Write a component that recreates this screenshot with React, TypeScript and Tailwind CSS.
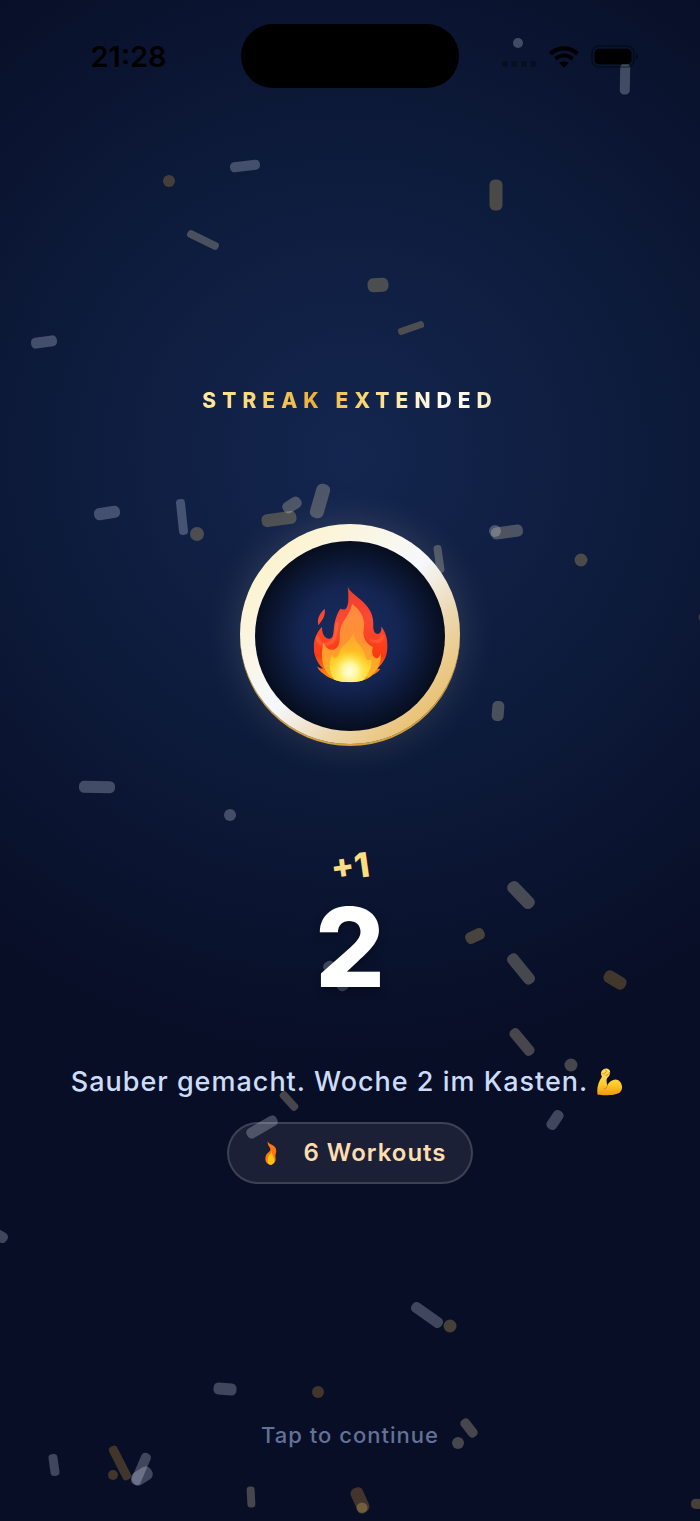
// Full-screen celebration shown after a workout week is completed: confetti,
// the flame medal, the new streak count and a chip with the workout total.

type Tone = 'silver' | 'cream' | 'gold' | 'amber'

type Piece = {
  x: number
  y: number
  w: number
  h: number
  rotate?: number
  tone: Tone
}

const TONES: Record<Tone, string> = {
  silver: '#e8eeff',
  cream: '#fff0c0',
  gold: '#ffd670',
  amber: '#f0b040',
}

// x / y are the centre of each piece.
const CONFETTI: Piece[] = [
  { x: 518, y: 43, w: 10, h: 10, tone: 'silver' },
  { x: 625, y: 79, w: 10, h: 31, rotate: 1, tone: 'silver' },
  { x: 245, y: 166, w: 30, h: 10, rotate: -7, tone: 'silver' },
  { x: 169, y: 181, w: 12, h: 12, tone: 'amber' },
  { x: 496, y: 195, w: 13, h: 31, tone: 'gold' },
  { x: 203, y: 240, w: 34, h: 8, rotate: 26, tone: 'cream' },
  { x: 378, y: 285, w: 21, h: 14, rotate: -4, tone: 'gold' },
  { x: 411, y: 328, w: 27, h: 7, rotate: -19, tone: 'gold' },
  { x: 44, y: 342, w: 26, h: 11, rotate: -8, tone: 'silver' },
  { x: 107, y: 513, w: 26, h: 12, rotate: -9, tone: 'silver' },
  { x: 182, y: 517, w: 9, h: 36, rotate: -6, tone: 'silver' },
  { x: 197, y: 534, w: 14, h: 14, tone: 'gold' },
  { x: 279, y: 519, w: 35, h: 13, rotate: -8, tone: 'gold' },
  { x: 292, y: 505, w: 20, h: 12, rotate: -32, tone: 'cream' },
  { x: 320, y: 501, w: 14, h: 35, rotate: 16, tone: 'cream' },
  { x: 439, y: 559, w: 8, h: 28, rotate: -8, tone: 'cream' },
  { x: 495, y: 531, w: 12, h: 12, tone: 'silver' },
  { x: 507, y: 532, w: 32, h: 12, rotate: -8, tone: 'cream' },
  { x: 581, y: 560, w: 13, h: 13, tone: 'gold' },
  { x: 703, y: 617, w: 9, h: 9, tone: 'amber' },
  { x: 498, y: 711, w: 12, h: 20, rotate: 4, tone: 'cream' },
  { x: 97, y: 787, w: 36, h: 12, rotate: 1, tone: 'silver' },
  { x: 230, y: 815, w: 12, h: 12, tone: 'silver' },
  { x: 521, y: 895, w: 33, h: 13, rotate: 46, tone: 'cream' },
  { x: 475, y: 936, w: 20, h: 12, rotate: -25, tone: 'gold' },
  { x: 521, y: 969, w: 36, h: 12, rotate: 51, tone: 'cream' },
  { x: 336, y: 976, w: 34, h: 12, rotate: 54, tone: 'silver' },
  { x: 615, y: 980, w: 24, h: 13, rotate: 30, tone: 'amber' },
  { x: 522, y: 1042, w: 32, h: 11, rotate: 50, tone: 'cream' },
  { x: 571, y: 1065, w: 13, h: 13, tone: 'cream' },
  { x: 289, y: 1101, w: 23, h: 8, rotate: 48, tone: 'cream' },
  { x: 262, y: 1127, w: 34, h: 11, rotate: -30, tone: 'silver' },
  { x: 555, y: 1120, w: 21, h: 11, rotate: -56, tone: 'silver' },
  { x: 0, y: 1236, w: 16, h: 11, rotate: 30, tone: 'silver' },
  { x: 427, y: 1315, w: 36, h: 11, rotate: 35, tone: 'silver' },
  { x: 450, y: 1326, w: 13, h: 13, tone: 'gold' },
  { x: 225, y: 1389, w: 23, h: 12, rotate: 5, tone: 'silver' },
  { x: 318, y: 1392, w: 12, h: 12, tone: 'amber' },
  { x: 469, y: 1428, w: 21, h: 10, rotate: 52, tone: 'cream' },
  { x: 458, y: 1443, w: 12, h: 12, tone: 'cream' },
  { x: 54, y: 1465, w: 9, h: 22, rotate: -8, tone: 'silver' },
  { x: 120, y: 1463, w: 9, h: 37, rotate: -27, tone: 'amber' },
  { x: 113, y: 1475, w: 10, h: 10, tone: 'amber' },
  { x: 141, y: 1469, w: 10, h: 34, rotate: 23, tone: 'silver' },
  { x: 142, y: 1476, w: 22, h: 14, rotate: -32, tone: 'silver' },
  { x: 251, y: 1497, w: 8, h: 21, rotate: -3, tone: 'cream' },
  { x: 360, y: 1500, w: 13, h: 26, rotate: -24, tone: 'amber' },
  { x: 362, y: 1508, w: 11, h: 11, tone: 'gold' },
  { x: 699, y: 1504, w: 16, h: 10, rotate: 5, tone: 'gold' },
]

function Confetti() {
  return (
    <svg
      className="pointer-events-none absolute inset-0 h-full w-full"
      viewBox="0 0 700 1521"
      preserveAspectRatio="xMidYMid slice"
      aria-hidden="true"
    >
      {CONFETTI.map((p, i) => (
        <rect
          key={i}
          x={p.x - p.w / 2}
          y={p.y - p.h / 2}
          width={p.w}
          height={p.h}
          rx={p.w === p.h ? p.w / 2 : Math.min(p.w, p.h) * 0.42}
          fill={TONES[p.tone]}
          fillOpacity={0.25}
          transform={`rotate(${p.rotate ?? 0} ${p.x} ${p.y})`}
        />
      ))}
    </svg>
  )
}

function StatusBar() {
  return (
    <header className="relative grid grid-cols-[1fr_218px_1fr] items-center pt-6 text-black">
      <time className="pt-0.5 pl-4 text-center text-[29px] leading-8 font-semibold">21:28</time>
      <div className="h-16 rounded-full bg-black" />
      <div className="flex items-center justify-center gap-3 pr-5">
        <svg width="36" height="22" viewBox="0 0 36 22" opacity="0.3">
          <rect x="1" y="16" width="6" height="6" rx="2" />
          <rect x="10" y="16" width="6" height="6" rx="2" />
          <rect x="20" y="16" width="6" height="6" rx="2" />
          <rect x="29" y="16" width="6" height="6" rx="2" />
        </svg>
        <svg width="30" height="23" viewBox="0 0 30 23">
          <path d="M1.6 8.7A19.6 19.6 0 0 1 28.4 8.7" fill="none" stroke="black" strokeWidth="4.2" />
          <path d="M6.4 13.8A12.6 12.6 0 0 1 23.6 13.8" fill="none" stroke="black" strokeWidth="3.9" />
          <path d="M15 22.8L10.4 18A6.8 6.8 0 0 1 19.6 18Z" />
        </svg>
        <svg width="48" height="23" viewBox="0 0 48 23">
          <rect x="1" y="1" width="42" height="21" rx="7" fill="none" stroke="black" strokeOpacity="0.4" strokeWidth="1.6" />
          <rect x="3.5" y="3.8" width="37" height="15.4" rx="4.5" />
          <path d="M45 8.5c2.6.6 2.6 5.4 0 6z" opacity="0.5" />
        </svg>
      </div>
    </header>
  )
}

function FlameIcon() {
  return (
    <svg width="75" height="97" viewBox="72 50 224 290" aria-hidden="true">
      <defs>
        <linearGradient id="flame-body" x1="0" y1="0" x2="0" y2="1">
          <stop offset="0" stopColor="#f03a2c" />
          <stop offset="0.35" stopColor="#fb4a33" />
          <stop offset="0.72" stopColor="#fb3a12" />
          <stop offset="1" stopColor="#ff9d1c" />
        </linearGradient>
        <linearGradient id="flame-mid" x1="0" y1="0" x2="0" y2="1">
          <stop offset="0" stopColor="#ff8a42" />
          <stop offset="0.5" stopColor="#ff9133" />
          <stop offset="1" stopColor="#ffb41f" />
        </linearGradient>
        <linearGradient id="flame-inner" x1="0" y1="0" x2="0" y2="1">
          <stop offset="0" stopColor="#ffa02e" />
          <stop offset="0.5" stopColor="#ffc524" />
          <stop offset="1" stopColor="#ffe95a" />
        </linearGradient>
        <radialGradient id="flame-glow">
          <stop offset="0" stopColor="#fffde4" />
          <stop offset="0.4" stopColor="#fff79a" stopOpacity="0.95" />
          <stop offset="1" stopColor="#ffe21c" stopOpacity="0" />
        </radialGradient>
        <clipPath id="flame-clip">
          <path d="M176 53C185 75 225 90 243 125C258 155 248 172 255 187C263 199 279 194 276 171C286 182 298 210 294 240C292 265 280 282 264 297L273 298C268 306 258 312 250 316C235 330 207 338 182 338C150 338 122 328 105 314C95 308 88 300 84 291C91 296 97 297 102 297C85 280 74 260 74 230C74 208 86 185 99 172C98 195 108 209 122 208C137 205 131 180 138 155C142 138 147 128 154 118C160 121 166 121 170 118C180 108 178 80 176 53Z" />
        </clipPath>
        <filter id="flame-soft" x="-20%" y="-20%" width="140%" height="140%">
          <feGaussianBlur stdDeviation="3" />
        </filter>
      </defs>
      <path d="M107 118C109 137 104 148 88 167C83 150 90 133 107 118Z" fill="#f8492f" />
      <g clipPath="url(#flame-clip)">
        <rect x="72" y="50" width="224" height="290" fill="url(#flame-body)" />
        <path
          d="M84 200C88 228 105 232 130 216C141 208 139 185 145 160"
          fill="none"
          stroke="#ff8655"
          strokeWidth="7"
          opacity="0.6"
          filter="url(#flame-soft)"
        />
        <path
          d="M280 196C279 216 262 222 244 210"
          fill="none"
          stroke="#ff7a50"
          strokeWidth="7"
          opacity="0.6"
          filter="url(#flame-soft)"
        />
        <path
          d="M189 103C218 126 229 150 223 182C219 207 236 226 251 232C246 248 250 264 262 266C268 266 272 258 274 250C278 284 262 305 240 322L125 322C102 300 92 268 103 219C110 240 130 248 145 232C158 216 146 190 158 165C168 145 184 130 189 103Z"
          fill="url(#flame-mid)"
        />
        <path
          d="M193 192C196 220 224 230 228 260C232 275 242 272 246 268C250 294 234 318 216 338L142 338C122 312 116 286 128 256C134 268 144 268 150 252C156 228 180 218 193 192Z"
          fill="url(#flame-inner)"
        />
        <ellipse cx="182" cy="305" rx="60" ry="66" fill="url(#flame-glow)" />
      </g>
    </svg>
  )
}

function Medal() {
  return (
    <div className="flex size-[220px] items-center justify-center rounded-full bg-[linear-gradient(135deg,#fff0bd_0%,#fcf4d6_20%,#f6f8fe_50%,#ecd8b0_68%,#e9c172_86%,#e3b04a_100%)] pt-1 shadow-[0_2px_0_#d3a03a,0_0_40px_rgba(255,244,220,0.15)]">
      <div className="flex size-[190px] items-center justify-center rounded-full bg-[radial-gradient(circle_closest-side,#182d60_0%,#142552_52%,#0c1837_78%,#060d1d_100%)] pb-0.5">
        <FlameIcon />
      </div>
    </div>
  )
}

function BicepsIcon() {
  return (
    <svg width="27" height="28" viewBox="740 50 82 84" role="img" aria-label="Stark">
      <defs>
        <linearGradient id="arm" x1="0" y1="0" x2="0" y2="1">
          <stop offset="0" stopColor="#ffe06a" />
          <stop offset="0.6" stopColor="#ffca2c" />
          <stop offset="1" stopColor="#f0970d" />
        </linearGradient>
      </defs>
      <path
        d="M762 54C770 48 784 51 783 63C782 72 778 76 774 80C770 87 773 96 774 102C784 84 803 79 813 91C821 101 822 116 812 124C798 134 764 133 745 131C741 112 747 92 758 76C753 68 755 58 762 54Z"
        fill="url(#arm)"
      />
      <path
        d="M760 66c4 3 9 1 10-4M770 72c5 0 10-4 11-9M768 55l5 5M774 102c0 6-4 10-9 11"
        fill="none"
        stroke="#c87a08"
        strokeWidth="2.5"
        strokeLinecap="round"
      />
    </svg>
  )
}

function TinyFlame() {
  return (
    <svg width="12" height="24" viewBox="647 273 36 73" aria-hidden="true">
      <path
        d="M655 274C660 287 682 284 681 304C680 312 677 316 679 326C680 338 671 345 664 345C654 345 648 338 648 328C648 314 655 311 662 303C668 294 653 290 655 274Z"
        fill="#ff7a0a"
      />
      <path
        d="M668 303C666 314 655 317 655 329C654 340 659 345 664 345C671 345 676 338 675 329C674 322 667 316 668 303Z"
        fill="#ffc313"
      />
    </svg>
  )
}

export default function App() {
  return (
    <div className="relative flex min-h-screen flex-col overflow-hidden bg-[radial-gradient(circle_600px_at_50%_30%,#14264f_0%,#0c1938_58%,#080e26_100%)] font-['Inter','Liberation_Sans',sans-serif]">
      <Confetti />
      <StatusBar />

      <main className="relative flex flex-1 flex-col items-center justify-center px-4 pt-[62px]">
        <h1 className="bg-[linear-gradient(90deg,#fde9a0_0%,#fbdc80_14%,#efb03a_38%,#fbd876_56%,#ffffff_82%,#f8e9b0_100%)] bg-clip-text text-[21px] leading-[30px] font-extrabold tracking-[6px] text-transparent">
          STREAK EXTENDED
        </h1>

        <div className="mt-[108px]">
          <Medal />
        </div>

        <p className="mt-[107px] -rotate-8 text-[34px] leading-8 font-extrabold text-[#fddc82]">+1</p>
        <p className="mt-3 text-[110px] leading-[104px] font-extrabold text-white [text-shadow:0_4px_8px_rgba(0,0,0,0.35)]">
          2
        </p>

        <p className="mt-[65px] flex items-center gap-2 pr-[6px] text-[27px] leading-9 font-medium tracking-[1px] text-[#ccdcf8]">
          Sauber gemacht. Woche 2 im Kasten.
          <BicepsIcon />
        </p>

        <div className="mt-[22px] flex h-[62px] items-center gap-[26px] rounded-full border-2 border-white/15 bg-white/8 pr-6 pl-9 text-[24px] font-semibold tracking-[1px] text-[#ffdcae]">
          <TinyFlame />
          <span>6 Workouts</span>
        </div>
      </main>

      <footer className="relative flex justify-center pb-[70px]">
        <button type="button" className="text-[22px] leading-8 font-medium tracking-[1px] text-[#637296]">
          Tap to continue
        </button>
      </footer>
    </div>
  )
}
